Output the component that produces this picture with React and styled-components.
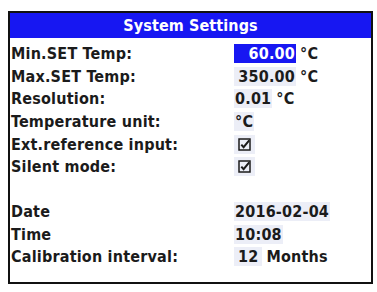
import React from "react";
import styled, { createGlobalStyle } from "styled-components";

const GlobalStyle = createGlobalStyle`
  html, body {
    margin: 0;
    padding: 0;
    background: #ffffff;
  }
  body {
    font-family: "DejaVu Sans Condensed", "DejaVu Sans", "Liberation Sans", sans-serif;
  }
`;

const Page = styled.div`
  width: 377px;
  height: 292px;
  padding: 11px 4px 0 8px;
  box-sizing: border-box;
`;

const Frame = styled.div`
  width: 365px;
  height: 273px;
  box-sizing: border-box;
  border: 2px solid #111111;
  display: flex;
  flex-direction: column;
`;

const Header = styled.div`
  height: 25px;
  background: #1717f2;
  color: #ffffff;
  font-weight: bold;
  font-size: 16px;
  display: flex;
  align-items: center;
  justify-content: center;
  letter-spacing: 0.1px;
`;

const Body = styled.div`
  display: flex;
  flex-direction: column;
  padding: 4px 0 0 1px;
`;

const Row = styled.div`
  height: 22.7px;
  display: flex;
  align-items: center;
  font-size: 16px;
  font-weight: bold;
  color: #1b1b1b;
  letter-spacing: 0.2px;
`;

const Spacer = styled.div`
  height: ${(p) => p.$h}px;
`;

const Label = styled.div`
  width: 223px;
  white-space: nowrap;
`;

const Value = styled.div`
  display: flex;
  align-items: center;
  gap: 4px;
`;

const Box = styled.span`
  display: inline-flex;
  align-items: center;
  justify-content: ${(p) => (p.$right ? "flex-end" : "flex-start")};
  height: 19px;
  width: ${(p) => (p.$w ? `${p.$w}px` : "auto")};
  padding: 0 ${(p) => (p.$pad ?? 1)}px;
  box-sizing: border-box;
  background: ${(p) => (p.$active ? "#1717f2" : "#eceef7")};
  color: ${(p) => (p.$active ? "#ffffff" : "#1b1b1b")};
`;

const Unit = styled.span`
  color: #1b1b1b;
`;

const Check = () => (
  <svg width="13" height="13" viewBox="0 0 13 13">
    <rect x="1" y="1" width="11" height="11" fill="none" stroke="#1b1b1b" strokeWidth="1.5" />
    <path d="M3.3 6.6 L5.6 9.2 L11.2 2.4" fill="none" stroke="#1b1b1b" strokeWidth="2" />
  </svg>
);

export default function App() {
  return (
    <Page>
      <GlobalStyle />
      <Frame>
        <Header>System Settings</Header>
        <Body>
          <Row>
            <Label>Min.SET Temp:</Label>
            <Value>
              <Box $active $right $w={62}>60.00</Box>
              <Unit>°C</Unit>
            </Value>
          </Row>
          <Row>
            <Label>Max.SET Temp:</Label>
            <Value>
              <Box $right $w={62}>350.00</Box>
              <Unit>°C</Unit>
            </Value>
          </Row>
          <Row>
            <Label>Resolution:</Label>
            <Value>
              <Box>0.01</Box>
              <Unit>°C</Unit>
            </Value>
          </Row>
          <Row>
            <Label>Temperature unit:</Label>
            <Value>
              <Box>°C</Box>
            </Value>
          </Row>
          <Row>
            <Label>Ext.reference input:</Label>
            <Value>
              <Box $pad={4}>
                <Check />
              </Box>
            </Value>
          </Row>
          <Row>
            <Label>Silent mode:</Label>
            <Value>
              <Box $pad={4}>
                <Check />
              </Box>
            </Value>
          </Row>
          <Spacer $h={22} />
          <Row>
            <Label>Date</Label>
            <Value>
              <Box>2016-02-04</Box>
            </Value>
          </Row>
          <Row>
            <Label>Time</Label>
            <Value>
              <Box>10:08</Box>
            </Value>
          </Row>
          <Row>
            <Label>Calibration interval:</Label>
            <Value>
              <Box $pad={4}>12</Box>
              <Unit>Months</Unit>
            </Value>
          </Row>
        </Body>
      </Frame>
    </Page>
  );
}
